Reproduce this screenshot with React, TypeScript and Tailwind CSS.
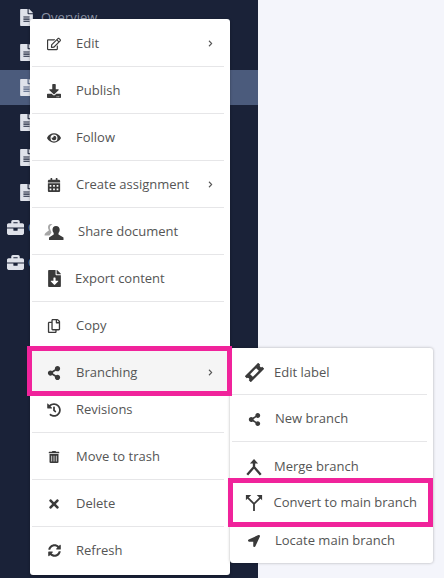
import type { ReactNode } from "react";
import {
  FaBriefcase,
  FaCalendarAlt,
  FaChevronRight,
  FaDownload,
  FaEye,
  FaFileAlt,
  FaFileDownload,
  FaHistory,
  FaLocationArrow,
  FaRegCopy,
  FaRegEdit,
  FaShareAlt,
  FaSyncAlt,
  FaTimes,
  FaTrashAlt,
} from "react-icons/fa";

function ShareUserIcon() {
  return (
    <svg viewBox="0 0 20 18" className="h-[18px] w-[20px]" fill="currentColor">
      <path d="M7 1c-2 0-3 1.500-3 3.500 0 1 .4 2 1 2.800L1.500 10c-.7.600-1 1.500-1 2.500h5l2-3-1-2.500c-.6-1-.8-2-.6-3C6 3 7 2 8.500 1.500 8 1.200 7.500 1 7 1z" opacity=".45" />
      <path d="M12 3c-2.300 0-3.500 1.700-3.500 3.800 0 1.300.5 2.500 1.200 3.200v1.500L5 14.500V17h14.500v-2.500l-5-3V10c.8-.8 1.200-2 1.200-3.200C15.700 4.700 14.300 3 12 3z" />
    </svg>
  );
}

function LabelIcon() {
  return (
    <svg viewBox="0 0 20 20" className="h-[19px] w-[19px]" fill="currentColor">
      <path
        fillRule="evenodd"
        transform="rotate(-45 10 10)"
        d="M0 5.500h20v3a1.500 1.500 0 000 3v3H0v-3a1.500 1.500 0 000-3zM5.500 8v4h9V8z"
      />
    </svg>
  );
}

function MergeIcon() {
  return (
    <svg
      viewBox="0 0 20 20"
      className="h-[18px] w-[18px]"
      fill="none"
      stroke="currentColor"
      strokeWidth="2.600"
    >
      <path d="M10 4v6M2.500 18.500L10 10l7.500 8.500" />
      <path d="M5.500 6L10 1l4.500 5z" fill="currentColor" stroke="none" />
    </svg>
  );
}

function ConvertIcon() {
  return (
    <svg
      viewBox="0 0 20 20"
      className="h-[18px] w-[18px]"
      fill="none"
      stroke="currentColor"
      strokeWidth="2"
    >
      <path d="M10 19v-8L3 4M10 11l7-7" />
      <path d="M1 7V1h6zM19 7V1h-6z" fill="currentColor" stroke="none" />
    </svg>
  );
}

type RowProps = {
  icon: ReactNode;
  label: string;
  arrow?: boolean;
  last?: boolean;
  height?: string;
  active?: boolean;
  textClass?: string;
};

function Row({ icon, label, arrow, last, height = "h-[47px]", active, textClass = "ml-[12px]" }: RowProps) {
  return (
    <div className={`relative flex items-center pl-[14px] pr-[16px] ${height} ${active ? "bg-[#f5f5f5]" : ""}`}>
      <span className="flex w-5 justify-center text-[14px] text-[#3a3a3a]">{icon}</span>
      <span className={`${textClass} whitespace-nowrap text-[13px] text-[#555555]`}>{label}</span>
      {arrow && <FaChevronRight className="ml-auto text-[7px] text-[#555555]" />}
      {!last && <div className="absolute right-[6px] bottom-0 left-[2px] border-b border-[#e6e6e8]" />}
    </div>
  );
}

function SideRow({ icon, active, label }: { icon: ReactNode; active?: boolean; label?: string }) {
  return (
    <div className={`flex h-[35px] items-center pl-[18px] text-[#dfe2ea] ${active ? "bg-[#4b5b7c]" : ""}`}>
      {icon}
      {label && <span className="ml-[6px] text-[13px] text-[#8c93a5]">{label}</span>}
    </div>
  );
}

export default function App() {
  const doc = <FaFileAlt className="text-[17px]" />;
  const bag = <FaBriefcase className="-ml-[11px] mr-[-2px] text-[17px]" />;

  return (
    <div className="relative h-[578px] w-[444px] overflow-hidden bg-[#f4f5fb] font-['Open_Sans',sans-serif]">
      {/* sidebar */}
      <div className="h-full w-[258px] bg-[#1a2238]">
        <SideRow icon={doc} label="Overview" />
        <SideRow icon={doc} />
        <SideRow icon={doc} active />
        <SideRow icon={doc} />
        <SideRow icon={doc} />
        <SideRow icon={doc} />
        <SideRow icon={bag} label="C" />
        <SideRow icon={bag} label="C" />
      </div>

      {/* main context menu */}
      <div className="absolute top-[19px] left-[30px] w-[200px] rounded-[3px] bg-white shadow-[0_1px_3px_rgba(0,0,0,0.3)]">
        <Row icon={<FaRegEdit />} label="Edit" arrow height="h-[48px] pt-[1px]" />
        <Row icon={<FaDownload />} label="Publish" />
        <Row icon={<FaEye />} label="Follow" />
        <Row icon={<FaCalendarAlt />} label="Create assignment" arrow />
        <Row icon={<ShareUserIcon />} label="Share document" textClass="ml-[14px]" />
        <Row icon={<FaFileDownload className="text-[17px]" />} label="Export content" textClass="ml-[11px]" />
        <Row icon={<FaRegCopy />} label="Copy" />
        <Row icon={<FaShareAlt />} label="Branching" arrow active last />
        <Row icon={<FaHistory />} label="Revisions" height="h-[37px] pb-[10px]" />
        <Row icon={<FaTrashAlt className="text-[12px]" />} label="Move to trash" />
        <Row icon={<FaTimes />} label="Delete" />
        <Row icon={<FaSyncAlt className="text-[13px]" />} label="Refresh" last height="h-[48px] pb-[1px]" />
      </div>

      {/* branching submenu */}
      <div className="absolute top-[348px] left-[230px] w-[203px] rounded-[3px] bg-white shadow-[0_0_3px_rgba(0,0,0,0.3)]">
        <Row icon={<LabelIcon />} label="Edit label" textClass="ml-[10px]" height="h-[47px] pt-[2px]" />
        <Row icon={<FaShareAlt className="text-[13px]" />} label="New branch" textClass="ml-[11px]" height="h-[47px] pt-[1px]" />
        <Row icon={<MergeIcon />} label="Merge branch" textClass="ml-[10px]" height="h-[37px] pt-[12px]" last />
        <Row icon={<ConvertIcon />} label="Convert to main branch" textClass="ml-[10px]" height="h-[48px]" last />
        <Row icon={<FaLocationArrow className="text-[12px]" />} label="Locate main branch" textClass="ml-[11px]" height="h-[36px] pb-[9px]" last />
      </div>

      {/* callouts */}
      <div className="absolute top-[346px] left-[27px] h-[50px] w-[205px] border-[5px] border-[#f0239b]" />
      <div className="absolute top-[478px] left-[228px] h-[49px] w-[205px] border-[5px] border-[#f0239b]" />
    </div>
  );
}
